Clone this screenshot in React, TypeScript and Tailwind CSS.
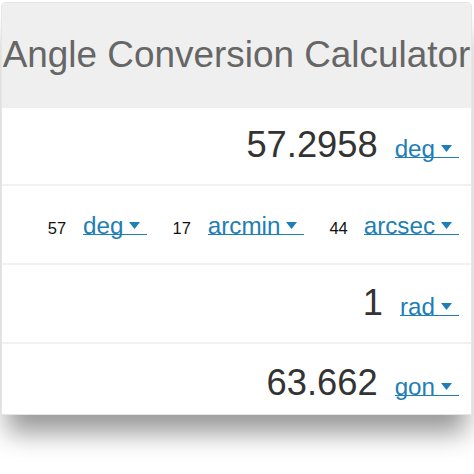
import React from 'react';

type Row = { value: string; unit: string };

const rows: Row[] = [
  { value: '57.2958', unit: 'deg' },
  { value: '1', unit: 'rad' },
  { value: '63.662', unit: 'gon' },
];

function UnitLink({ unit }: { unit: string }) {
  return (
    <span className="inline-flex items-end border-b border-[#1e7eb6] pr-[7px] text-[#1e7eb6]">
      <span className="text-[24.2px] leading-[17px]">{unit}</span>
      <svg className="ml-[6px] mb-[5px]" width="11" height="7" viewBox="0 0 11 7">
        <polygon points="0,0 11,0 5.5,7" fill="#1e7eb6" />
      </svg>
    </span>
  );
}

function ValueRow({ row, last }: { row: Row; last?: boolean }) {
  return (
    <div
      className={`flex items-baseline justify-end pr-[12px] ${
        last ? 'h-[70px] pt-[21px]' : 'h-[79px] pt-[20px] border-b-2 border-[#f1f1f1]'
      }`}
    >
      <span className="text-[36.3px] text-[#333] leading-none mr-[17px]">{row.value}</span>
      <UnitLink unit={row.unit} />
    </div>
  );
}

export default function App() {
  return (
    <div
      className="w-[474px] h-[474px] bg-white pt-[2px] px-[1px]"
      style={{ fontFamily: '"Liberation Sans", Arial, sans-serif' }}
    >
      <div className="w-[471px] rounded-t-[4px] border border-[#e6e6e6] bg-white shadow-[0_24px_24px_-6px_rgba(0,0,0,0.4)]">
        <div className="h-[105px] rounded-t-[4px] bg-[#efefef] pt-[34px] text-center">
          <h1 className="text-[36.9px] text-[#666] leading-none">Angle Conversion Calculator</h1>
        </div>

        <div className="h-[78px] flex items-baseline justify-end pr-[12px] pt-[19px] border-b-2 border-[#f1f1f1]">
          <span className="text-[36.3px] text-[#333] leading-none mr-[17px]">{rows[0].value}</span>
          <UnitLink unit={rows[0].unit} />
        </div>

        <div className="h-[79px] flex items-baseline justify-end pr-[12px] pt-[31px] border-b-2 border-[#f1f1f1] text-[#111]">
          <span className="text-[16.5px] leading-none mr-[17px]">57</span>
          <UnitLink unit="deg" />
          <span className="text-[16.5px] leading-none ml-[25px] mr-[17px]">17</span>
          <UnitLink unit="arcmin" />
          <span className="text-[16.5px] leading-none ml-[25px] mr-[16px]">44</span>
          <UnitLink unit="arcsec" />
        </div>

        <ValueRow row={rows[1]} />
        <ValueRow row={rows[2]} last />
      </div>
    </div>
  );
}
